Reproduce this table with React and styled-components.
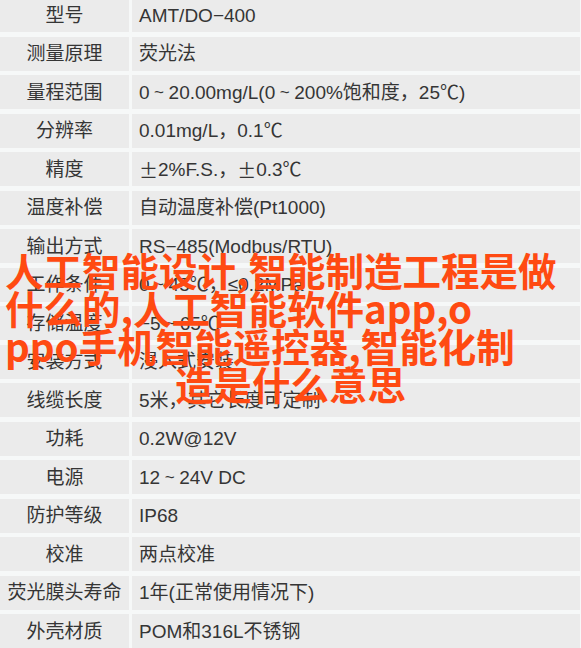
import React from "react";
import styled, { createGlobalStyle } from "styled-components";

const Global = createGlobalStyle`
  html, body { margin: 0; padding: 0; }
  body {
    background: #f6f8f8;
    font-family: "Liberation Sans", "Noto Sans CJK SC", sans-serif;
    width: 581px;
    height: 648px;
    overflow: hidden;
  }
`;

const Page = styled.div`
  position: relative;
  width: 581px;
  height: 648px;
  overflow: hidden;
`;

const Table = styled.div`
  display: grid;
  grid-template-columns: 129px 1fr;
  grid-auto-rows: 34px;
  column-gap: 3px;
  row-gap: 4.5px;
  margin-top: -2px;
  padding-right: 1px;
`;

const Cell = styled.div`
  background: #ebebeb;
  color: #353535;
  font-size: 19px;
  display: flex;
  align-items: center;
  justify-content: ${(p) => (p.$label ? "center" : "flex-start")};
  padding-left: ${(p) => (p.$label ? "0" : "7px")};
  white-space: nowrap;
  line-height: 1;
`;

const Tilde = styled.span`
  display: inline-block;
  width: 19px;
  text-align: center;
  font-family: "Liberation Sans", sans-serif;
  font-size: 17px;
`;

const Wide = styled.span`
  display: inline-block;
  width: 19px;
  text-align: left;
  font-family: "Noto Sans CJK SC", sans-serif;
`;

const Overlay = styled.div`
  position: absolute;
  left: 0;
  right: 0;
  top: 250px;
  font-family: "Noto Sans CJK SC", sans-serif;
  font-weight: 700;
  font-size: 38.5px;
  line-height: 38px;
  color: #ff4a12;
`;

const Line = styled.div`
  white-space: nowrap;
  padding-left: ${(p) => (p.$center ? "0" : "5px")};
  text-align: ${(p) => (p.$center ? "center" : "left")};
`;

const rows = [
  ["型号", "AMT/DO−400"],
  ["测量原理", "荧光法"],
  ["量程范围", "0～20.00mg/L(0～200%饱和度，25℃)"],
  ["分辨率", "0.01mg/L，0.1℃"],
  ["精度", "±2%F.S.，±0.3℃"],
  ["温度补偿", "自动温度补偿(Pt1000)"],
  ["输出方式", "RS−485(Modbus/RTU)"],
  ["工作条件", "0～45℃，≤0.2MPa"],
  ["存储温度", "−5～65℃"],
  ["安装方式", "浸入式安装"],
  ["线缆长度", "5米，其它长度可定制"],
  ["功耗", "0.2W@12V"],
  ["电源", "12～24V DC"],
  ["防护等级", "IP68"],
  ["校准", "两点校准"],
  ["荧光膜头寿命", "1年(正常使用情况下)"],
  ["外壳材质", "POM和316L不锈钢"],
];

function renderValue(v) {
  return v.split(/(～|±)/).map((part, i) => {
    if (part === "～") return <Tilde key={i}>~</Tilde>;
    if (part === "±") return <Wide key={i}>±</Wide>;
    return <React.Fragment key={i}>{part}</React.Fragment>;
  });
}

export default function App() {
  return (
    <Page>
      <Global />
      <Table>
        {rows.map(([k, v]) => (
          <React.Fragment key={k}>
            <Cell $label>{k}</Cell>
            <Cell>{renderValue(v)}</Cell>
          </React.Fragment>
        ))}
      </Table>
      <Overlay>
        <Line>人工智能设计,智能制造工程是做</Line>
        <Line>什么的,人工智能软件app,o</Line>
        <Line>ppo手机智能遥控器,智能化制</Line>
        <Line $center>造是什么意思</Line>
      </Overlay>
    </Page>
  );
}
